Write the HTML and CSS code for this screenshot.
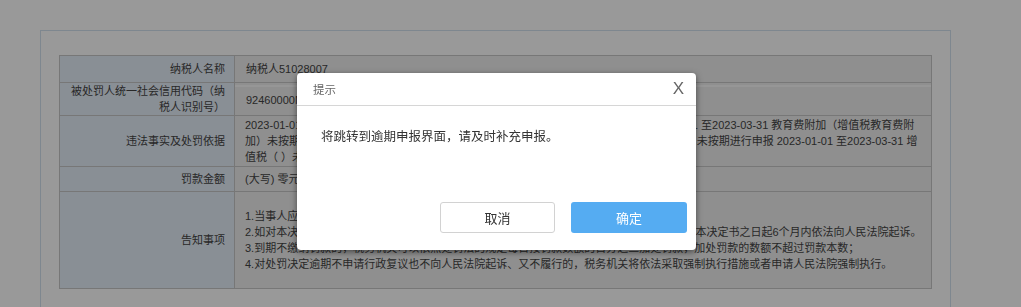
FILE: index.html
```html
<!DOCTYPE html>
<html lang="zh-CN">
<head>
    <meta charset="UTF-8">
    <meta name="viewport" content="width=device-width, initial-scale=1.0">
    <title>处罚决定</title>
    <link rel="stylesheet" href="styles.css">
</head>
<body>
    <div class="frame">
        <table class="info">
            <colgroup>
                <col class="col-label">
                <col>
            </colgroup>
            <tr>
                <th class="label">纳税人名称</th>
                <td class="value"><div class="field">纳税人51028007</div></td>
            </tr>
            <tr>
                <th class="label">被处罚人统一社会信用代码（纳税人识别号）</th>
                <td class="value"><div class="field field-top">92460000MA5TK8U31X</div></td>
            </tr>
            <tr>
                <th class="label">违法事实及处罚依据</th>
                <td class="value text">2023-01-01 至2023-03-31 地方教育附加（增值税地方教育附加）未按期进行申报 2023-01-01 至2023-03-31 教育费附加（增值税教育费附加）未按期进行申报 2023-01-01 至2023-03-31 城市维护建设税（增值税附城市维护建设税）未按期进行申报 2023-01-01 至2023-03-31 增值税（ ）未按期进行申报</td>
            </tr>
            <tr>
                <th class="label">罚款金额</th>
                <td class="value text">(大写) 零元整</td>
            </tr>
            <tr>
                <th class="label">告知事项</th>
                <td class="value notice">
                    1.当事人应当自收到本决定书之日起15日内缴纳罚款。<br>
                    2.如对本决定不服的，可以自收到本决定书之日起60日内依法申请税务行政复议，或者自收到本决定书之日起6个月内依法向人民法院起诉。<br>
                    3.到期不缴纳罚款的，税务机关可以依照处罚法的规定每日按罚款数额的百分之三加处罚款，加处罚款的数额不超过罚款本数；<br>
                    4.对处罚决定逾期不申请行政复议也不向人民法院起诉、又不履行的，税务机关将依法采取强制执行措施或者申请人民法院强制执行。
                </td>
            </tr>
        </table>
    </div>

    <div class="mask"></div>
    <div class="dialog">
        <div class="dialog-head">
            <span class="dialog-title">提示</span>
            <span class="dialog-close">X</span>
        </div>
        <div class="dialog-body">将跳转到逾期申报界面，请及时补充申报。</div>
        <div class="dialog-foot">
            <button class="btn btn-cancel">取消</button>
            <button class="btn btn-ok">确定</button>
        </div>
    </div>
</body>
</html>
```

FILE: styles.css
```css
body {
    margin: 0;
    background-color: #fff;
    font-family: "Liberation Sans", "Noto Sans CJK SC", sans-serif;
    font-size: 11px;
    color: #444;
}

.frame {
    box-sizing: border-box;
    width: 911px;
    min-height: 300px;
    margin: 30px 0 0 40px;
    padding: 24px 18px;
    border: 1px solid #d3e1ee;
}

.info {
    width: 100%;
    border-collapse: collapse;
    line-height: 16px;
}

.col-label {
    width: 175px;
}

.info th,
.info td {
    border: 1px solid #c6c6c6;
}

.label {
    padding: 0 9px 0 8px;
    background-color: #e4eef8;
    text-align: right;
    font-weight: normal;
}

.value {
    padding: 0;
    background-color: #eee;
}

.field {
    height: 26px;
    padding-left: 11px;
    line-height: 26px;
}

.field-top {
    border-top: 2px solid #fafafa;
    height: 27px;
}

.text {
    padding: 1px 8px 1px 10px;
}

.info tr:nth-child(4) .text {
    padding-top: 4px;
    padding-bottom: 4px;
}

.notice {
    padding: 16px 8px 16px 10px;
}

.mask {
    position: fixed;
    top: 0;
    left: 0;
    right: 0;
    bottom: 0;
    background-color: rgba(0, 0, 0, 0.4);
}

.dialog {
    position: fixed;
    left: 297px;
    top: 73px;
    width: 399px;
    height: 177px;
    background-color: #fff;
    border-radius: 4px;
    box-shadow: 0 2px 6px rgba(0, 0, 0, 0.5);
}

.dialog-head {
    display: flex;
    justify-content: space-between;
    align-items: center;
    height: 32px;
    padding: 0 12px 0 16px;
    border-bottom: 1px solid #d6d6d6;
}

.dialog-title {
    font-size: 11.5px;
    color: #666;
}

.dialog-close {
    font-size: 17px;
    color: #666;
    font-family: "Liberation Sans", sans-serif;
}

.dialog-body {
    padding: 22px 24px 0;
    height: 74px;
    font-size: 12.5px;
    line-height: 18px;
    color: #333;
}

.dialog-foot {
    display: flex;
    justify-content: flex-end;
    gap: 16px;
    padding-right: 9px;
}

.btn {
    width: 116px;
    height: 31px;
    border-radius: 3px;
    font-family: "Liberation Sans", "Noto Sans CJK SC", sans-serif;
    font-size: 13px;
    cursor: pointer;
}

.btn-cancel {
    width: 115px;
    border: 1px solid #d2d2d2;
    background-color: #fff;
    color: #333;
}

.btn-ok {
    border: none;
    background-color: #55acf2;
    color: #fff;
}
```
